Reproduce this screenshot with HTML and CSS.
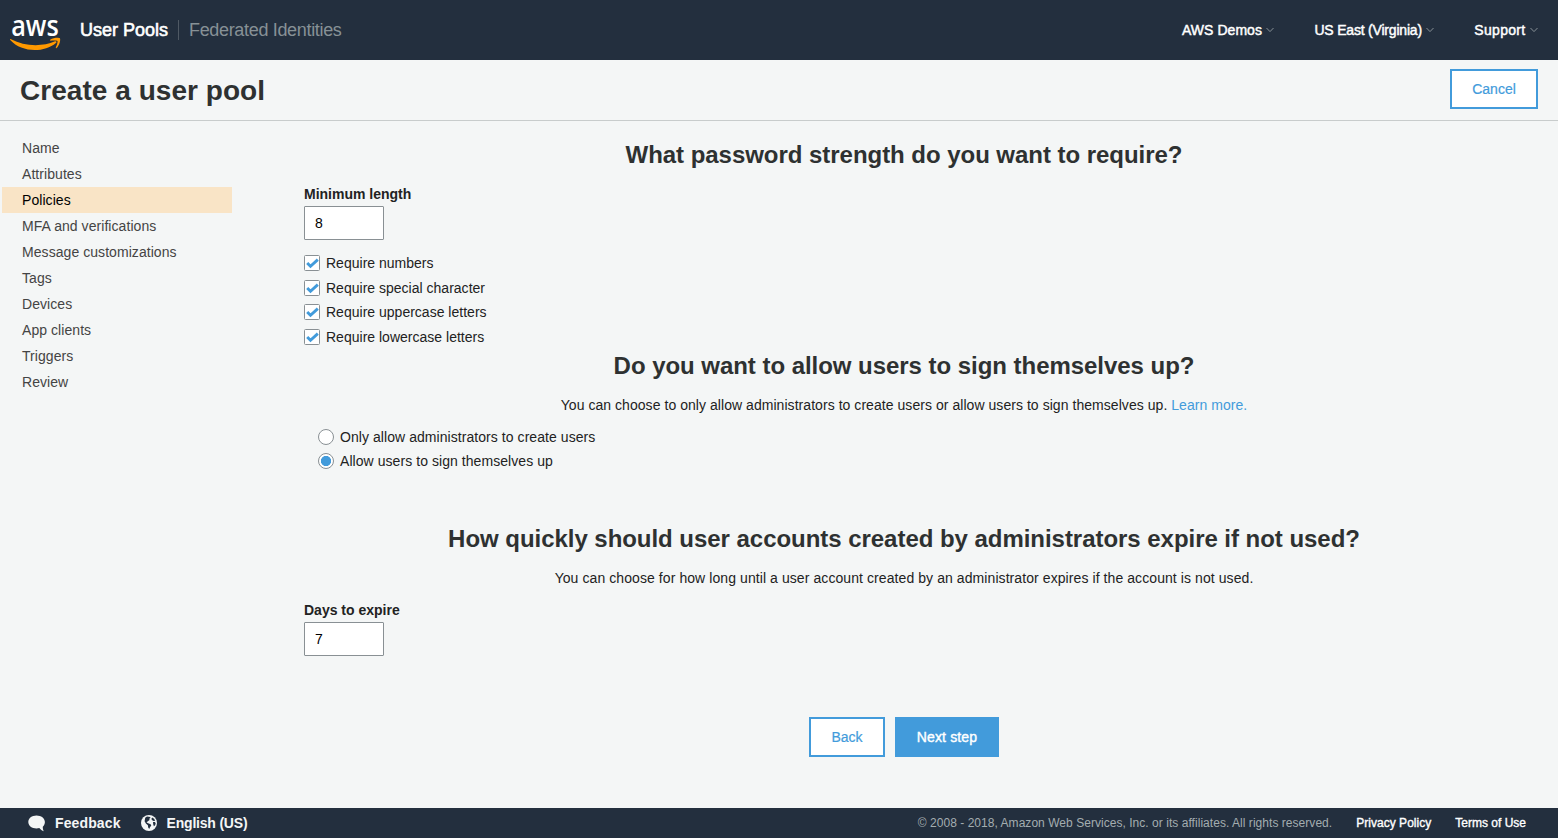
FILE: index.html
```html
<!DOCTYPE html>
<html lang="en">
<head>
<meta charset="utf-8">
<title>Create a user pool</title>
<link rel="stylesheet" href="styles.css">
</head>
<body>
<header class="topbar">
  <svg class="logo" width="52" height="34" viewBox="0 0 52 34">
    <text class="logo-word" x="1.2" y="18.500" textLength="47.500" lengthAdjust="spacingAndGlyphs">aws</text>
    <path class="logo-smile" d="M.2 23c-.5-.8.1-1.300.9-.8C14 29.300 32 30.100 45 24.300c1.300-.5 2.100.7.9 1.600C34 36 11.500 35.600.2 23z"/>
    <path class="logo-smile" d="M40.500 23.700c-.6 0-.5-.8 0-1.200 2.600-1.800 8.500-2.200 9.400-1.200.9 1.200-.4 7.300-3.300 9.700-.5.400-1 .200-.8-.4 1-2.300 2.200-5.600 1.600-6.500-.7-.9-4.500-.7-6.900-.4z"/>
  </svg>
  <a class="brand">User Pools</a>
  <a class="federated">Federated Identities</a>
  <nav class="menus">
    <a class="menu m-account">AWS Demos<svg width="8" height="6" viewBox="0 0 8 6"><path d="M.5 1 4 4.600 7.500 1"/></svg></a>
    <a class="menu m-region">US East (Virginia)<svg width="8" height="6" viewBox="0 0 8 6"><path d="M.5 1 4 4.600 7.500 1"/></svg></a>
    <a class="menu m-support">Support<svg width="8" height="6" viewBox="0 0 8 6"><path d="M.5 1 4 4.600 7.500 1"/></svg></a>
  </nav>
</header>
<section class="titlebar">
  <h1>Create a user pool</h1>
  <button class="btn cancel">Cancel</button>
</section>
<div class="layout">
  <ul class="steps">
    <li>Name</li>
    <li>Attributes</li>
    <li class="active">Policies</li>
    <li>MFA and verifications</li>
    <li>Message customizations</li>
    <li>Tags</li>
    <li>Devices</li>
    <li>App clients</li>
    <li>Triggers</li>
    <li>Review</li>
  </ul>
  <main class="content">
    <h2 class="h-strength">What password strength do you want to require?</h2>
    <label class="field-label">Minimum length</label>
    <input class="field" type="text" value="8">
    <div class="checks">
      <label class="check"><svg width="16" height="16" viewBox="0 0 16 16"><rect x=".5" y=".5" width="15" height="15" rx="1"/><path d="M3.200 8 6.500 11.300 13.800 4.700"/></svg><span>Require numbers</span></label>
      <label class="check"><svg width="16" height="16" viewBox="0 0 16 16"><rect x=".5" y=".5" width="15" height="15" rx="1"/><path d="M3.200 8 6.500 11.300 13.800 4.700"/></svg><span>Require special character</span></label>
      <label class="check"><svg width="16" height="16" viewBox="0 0 16 16"><rect x=".5" y=".5" width="15" height="15" rx="1"/><path d="M3.200 8 6.500 11.300 13.800 4.700"/></svg><span>Require uppercase letters</span></label>
      <label class="check"><svg width="16" height="16" viewBox="0 0 16 16"><rect x=".5" y=".5" width="15" height="15" rx="1"/><path d="M3.200 8 6.500 11.300 13.800 4.700"/></svg><span>Require lowercase letters</span></label>
    </div>
    <h2 class="h-signup">Do you want to allow users to sign themselves up?</h2>
    <p class="p-signup">You can choose to only allow administrators to create users or allow users to sign themselves up. <a class="link">Learn more.</a></p>
    <div class="radios">
      <label class="radio"><span class="dot"></span><span>Only allow administrators to create users</span></label>
      <label class="radio"><span class="dot on"></span><span>Allow users to sign themselves up</span></label>
    </div>
    <h2 class="h-expire">How quickly should user accounts created by administrators expire if not used?</h2>
    <p class="p-expire">You can choose for how long until a user account created by an administrator expires if the account is not used.</p>
    <label class="field-label">Days to expire</label>
    <input class="field" type="text" value="7">
    <div class="actions">
      <button class="btn back">Back</button>
      <button class="btn primary">Next step</button>
    </div>
  </main>
</div>
<footer class="footer">
  <svg class="bubble" width="18" height="17" viewBox="0 0 18 17"><path d="M8.500.500C3.900.500.300 3.300.300 7s3.600 6.500 8.200 6.500c1 0 2-.1 2.800-.4 1.200 1.400 2.700 2.900 4.600 3.200-.8-1.100-1.200-3.100-1.100-4.600 1.400-1.200 2.100-2.800 2.100-4.700C16.900 3.300 13.100.500 8.500.500z"/></svg>
  <a class="foot-bold feedback">Feedback</a>
  <svg class="globe" width="16" height="16" viewBox="0 0 16 16"><circle cx="8" cy="8" r="8"/><path d="M4.200 2.800 6 1.600 9.200 1.900 9.400 3 8.200 3.800 8.600 5 6.800 6.200 5.600 7.400 7.200 8.200 9.600 9.200 10.300 10.600 9 12.200 8.200 14 7.200 12.600 6.900 10.200 4.900 8.600 3.600 6.200zM11.200 2.400l1.900 1.300 1.100 2-1.700.2-1.700-.9-.3-1.400zM12 7l2 .1.700 1.300-.6 1.800-1.200 1-.7-2z"/></svg>
  <a class="foot-bold language">English (US)</a>
  <span class="copyright">© 2008 - 2018, Amazon Web Services, Inc. or its affiliates. All rights reserved.</span>
  <a class="foot-link privacy">Privacy Policy</a>
  <a class="foot-link terms">Terms of Use</a>
</footer>
</body>
</html>
```
FILE: styles.css
```css
* { box-sizing: border-box; }
body {
  margin: 0;
  height: 838px;
  display: flex;
  flex-direction: column;
  overflow: hidden;
  background: #f4f6f6;
  color: #222;
  font: 14px/20px "Liberation Sans", Arial, sans-serif;
  letter-spacing: .04px;
}
.topbar {
  height: 60px;
  flex: none;
  display: flex;
  align-items: center;
  padding: 0 20px 0 10px;
  background: #232f3e;
}
.logo { margin-top: 8px; overflow: visible; }
.logo-word { font: 600 28px "Open Sans", sans-serif; fill: #fff; letter-spacing: 0; }
.logo-smile { fill: #f90; }
.brand {
  width: 99px;
  margin-left: 18px;
  border-right: 1px solid #4f5964;
  font-size: 18px;
  letter-spacing: 0;
  color: #fff;
  -webkit-text-stroke: .6px #fff;
  white-space: nowrap;
}
.federated { margin-left: 10px; font-size: 18px; letter-spacing: -.33px; color: #879196; }
.menus { display: flex; margin-left: auto; gap: 40px; }
.menu {
  display: flex;
  align-items: center;
  gap: 4.500px;
  color: #fff;
  -webkit-text-stroke: .45px #fff;
}
.m-account { letter-spacing: .04px; }
.m-region { letter-spacing: -.2px; }
.m-support { letter-spacing: .3px; }
.menu svg path { fill: none; stroke: #879196; stroke-width: 1; }
.titlebar {
  height: 61px;
  flex: none;
  display: flex;
  align-items: center;
  justify-content: space-between;
  padding: 0 20px 3px;
  border-bottom: 1px solid #c8cccc;
}
h1 { margin: 4px 0 0; font-size: 28px; line-height: 34px; color: #2e3131; letter-spacing: .04px; }
.btn {
  height: 40px;
  padding: 0;
  border: 2px solid #429bdb;
  background: #fff;
  color: #429bdb;
  font: 14px/20px "Liberation Sans", Arial, sans-serif;
  -webkit-text-stroke: .2px currentColor;
}
.cancel { width: 88px; }
.layout { flex: 1; display: flex; min-height: 0; }
.steps {
  width: 250px;
  flex: none;
  margin: 0;
  padding: 14px 18px 0 2px;
  list-style: none;
}
.steps li { height: 26px; padding-left: 20px; line-height: 26px; color: #444; letter-spacing: .06px; }
.steps .active { background: #f9e4c6; color: #000; }
.content { width: 1200px; margin: 0 auto; padding-top: 18px; }
h2 {
  margin: 0;
  text-align: center;
  white-space: nowrap;
  font-size: 24px;
  line-height: 32px;
  letter-spacing: -.04px;
  color: #2e3131;
}
p { margin: 0; text-align: center; white-space: nowrap; letter-spacing: .05px; }
.p-expire { letter-spacing: .08px; }
.link { color: #429bdb; }
.field-label { display: block; height: 20px; margin-top: 13px; font-weight: bold; letter-spacing: 0; }
.field {
  display: block;
  width: 80px;
  height: 34px;
  margin-top: 2px;
  padding: 0 10px;
  border: 1px solid #899094;
  border-radius: 1px;
  background: #fff;
  color: #000;
  font: 14px "Liberation Sans", Arial, sans-serif;
}
.checks { margin-top: 11px; letter-spacing: .01px; }
.check { display: flex; align-items: center; height: 24.600px; gap: 6px; }
.check svg rect { fill: #fff; stroke: #899094; }
.check svg path { fill: none; stroke: #429bdb; stroke-width: 2.900; }
.h-signup { margin-top: 1px; }
.p-signup { margin-top: 13px; }
.radios { margin-top: 10px; padding-left: 14px; letter-spacing: .06px; }
.radio { display: flex; align-items: center; height: 24px; gap: 6px; }
.dot { width: 16px; height: 16px; border: 1px solid #899094; border-radius: 50%; background: #fff; }
.dot.on { background: radial-gradient(circle, #429bdb 4.800px, #fff 5.400px); }
.h-expire { margin-top: 50px; }
.p-expire { margin-top: 13px; }
.p-expire + .field-label { margin-top: 12px; }
.actions { display: flex; justify-content: center; gap: 10px; margin-top: 61px; }
.back { width: 76px; }
.primary { width: 104px; background: #429bdb; color: #fff; letter-spacing: .15px; -webkit-text-stroke: .4px #fff; }
.footer {
  height: 30px;
  flex: none;
  display: flex;
  align-items: center;
  padding: 0 32px 0 28px;
  background: #232f3e;
  color: #fff;
}
.bubble, .globe { fill: #f4f6f6; }
.globe path { fill: #232f3e; }
.foot-bold { font-weight: bold; color: #f4f6f6; }
.feedback { margin: 0 20px 0 9px; letter-spacing: .12px; }
.language { margin-left: 10px; letter-spacing: -.2px; }
.copyright { margin-left: auto; font-size: 12px; color: #a3adb0; }
.foot-link { font-size: 12px; color: #fff; margin-left: 24px; letter-spacing: .03px; -webkit-text-stroke: .35px #fff; }
.terms { letter-spacing: 0; }
```
